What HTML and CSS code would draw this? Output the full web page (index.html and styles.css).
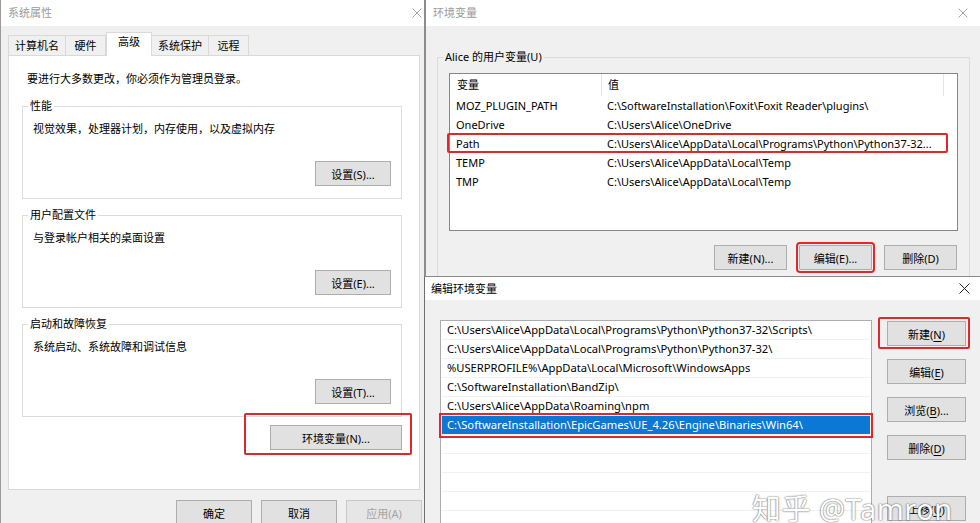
FILE: index.html
```html
<!DOCTYPE html>
<html lang="zh-CN">
<head>
    <meta charset="UTF-8">
    <title>系统属性 - 环境变量</title>
    <link rel="stylesheet" href="styles.css">
</head>
<body>
    <!-- 系统属性 -->
    <div class="win win-sys">
        <div class="titlebar inactive">
            <span class="title">系统属性</span>
            <svg class="close" width="10" height="10" viewBox="0 0 10 10"><path d="M0.5 0.5L9.5 9.5M9.5 0.5L0.5 9.5"/></svg>
        </div>
        <div class="tabs">
            <div class="tab">计算机名</div>
            <div class="tab">硬件</div>
            <div class="tab active">高级</div>
            <div class="tab">系统保护</div>
            <div class="tab">远程</div>
        </div>
        <div class="tab-panel">
            <p class="note">要进行大多数更改，你必须作为管理员登录。</p>
            <fieldset class="group">
                <legend>性能</legend>
                <p>视觉效果，处理器计划，内存使用，以及虚拟内存</p>
                <div class="btn-row"><button class="btn">设置(S)...</button></div>
            </fieldset>
            <fieldset class="group">
                <legend>用户配置文件</legend>
                <p>与登录帐户相关的桌面设置</p>
                <div class="btn-row"><button class="btn">设置(E)...</button></div>
            </fieldset>
            <fieldset class="group">
                <legend>启动和故障恢复</legend>
                <p>系统启动、系统故障和调试信息</p>
                <div class="btn-row"><button class="btn">设置(T)...</button></div>
            </fieldset>
            <div class="btn-row env-row">
                <button class="btn btn-env mark">环境变量(N)...</button>
            </div>
        </div>
        <div class="dlg-buttons">
            <button class="btn">确定</button>
            <button class="btn">取消</button>
            <button class="btn" disabled>应用(A)</button>
        </div>
    </div>

    <!-- 环境变量 -->
    <div class="win win-env">
        <div class="titlebar inactive">
            <span class="title">环境变量</span>
            <svg class="close" width="10" height="10" viewBox="0 0 10 10"><path d="M0.5 0.5L9.5 9.5M9.5 0.5L0.5 9.5"/></svg>
        </div>
        <fieldset class="group user-vars">
            <legend>Alice 的用户变量(U)</legend>
            <div class="listview">
                <div class="lv-row lv-head">
                    <span>变量</span><span>值</span><span></span>
                </div>
                <div class="lv-row"><span>MOZ_PLUGIN_PATH</span><span>C:\SoftwareInstallation\Foxit\Foxit Reader\plugins\</span></div>
                <div class="lv-row"><span>OneDrive</span><span>C:\Users\Alice\OneDrive</span></div>
                <div class="lv-row marked"><span>Path</span><span>C:\Users\Alice\AppData\Local\Programs\Python\Python37-32...</span></div>
                <div class="lv-row"><span>TEMP</span><span>C:\Users\Alice\AppData\Local\Temp</span></div>
                <div class="lv-row"><span>TMP</span><span>C:\Users\Alice\AppData\Local\Temp</span></div>
            </div>
            <div class="env-btns">
                <button class="btn">新建(N)...</button>
                <button class="btn outlined">编辑(E)...</button>
                <button class="btn">删除(D)</button>
            </div>
        </fieldset>
    </div>

    <!-- 编辑环境变量 -->
    <div class="win win-edit">
        <div class="titlebar">
            <span class="title">编辑环境变量</span>
            <svg class="close" width="11" height="11" viewBox="0 0 11 11"><path d="M0.5 0.5L10.5 10.5M10.5 0.5L0.5 10.5"/></svg>
        </div>
        <div class="edit-body">
            <div class="path-list">
                <div class="path-item">C:\Users\Alice\AppData\Local\Programs\Python\Python37-32\Scripts\</div>
                <div class="path-item">C:\Users\Alice\AppData\Local\Programs\Python\Python37-32\</div>
                <div class="path-item">%USERPROFILE%\AppData\Local\Microsoft\WindowsApps</div>
                <div class="path-item">C:\SoftwareInstallation\BandZip\</div>
                <div class="path-item">C:\Users\Alice\AppData\Roaming\npm</div>
                <div class="path-item selected">C:\SoftwareInstallation\EpicGames\UE_4.26\Engine\Binaries\Win64\</div>
                <div class="path-item"></div>
                <div class="path-item"></div>
                <div class="path-item"></div>
                <div class="path-item"></div>
                <div class="path-item"></div>
            </div>
            <div class="side-buttons">
                <button class="btn mark-new">新建(<u>N</u>)</button>
                <button class="btn">编辑(<u>E</u>)</button>
                <button class="btn">浏览(<u>B</u>)...</button>
                <button class="btn">删除(<u>D</u>)</button>
                <button class="btn gap-before">上移(<u>U</u>)</button>
            </div>
        </div>
    </div>

    <div class="watermark">知乎 @Tamron</div>
</body>
</html>
```

FILE: styles.css
```css
* {
    box-sizing: border-box;
}
body {
    margin: 0;
    width: 980px;
    height: 523px;
    overflow: hidden;
    position: relative;
    background: #7a7a7a;
    font-family: "Noto Sans", "Noto Sans CJK SC", sans-serif;
    font-size: 11px;
    color: #000;
}
p {
    margin: 0;
    line-height: 16px;
}

/* windows */
.win {
    position: absolute;
    background: #f0f0f0;
    overflow: hidden;
    display: flex;
    flex-direction: column;
}
.win-sys {
    left: 0;
    top: 0;
    width: 425px;
    height: 523px;
    border-left: 1px solid #9a9a9a;
    border-right: 1px solid #8c8c8c;
}
.win-env {
    left: 425px;
    top: 0;
    width: 555px;
    height: 300px;
    border-left: 1px solid #8c8c8c;
}
.win-edit {
    left: 424px;
    top: 276px;
    width: 556px;
    height: 247px;
    border-left: 1px solid #6e6e6e;
    border-top: 1px solid #8a8a8a;
}

.titlebar {
    height: 26px;
    flex-shrink: 0;
    background: #fff;
    display: flex;
    align-items: center;
    justify-content: space-between;
    padding: 0 12px 0 7px;
}
.titlebar .title {
    line-height: 16px;
}
.titlebar.inactive .title {
    color: #9b9b9b;
}
.close path {
    stroke: #222;
    stroke-width: 1;
    fill: none;
}
.titlebar.inactive .close path {
    stroke: #a6a6a6;
}
.win-sys .titlebar {
    padding-right: 2px;
}
.win-edit .titlebar {
    height: 23px;
    padding: 0 10px 0 6px;
}

/* buttons */
.btn {
    font-family: inherit;
    font-size: 11px;
    height: 25px;
    width: 75px;
    padding: 0;
    background: #e1e1e1;
    border: 1px solid #adadad;
    color: #000;
}
.btn:disabled {
    color: #a3a3a3;
    border-color: #c8c8c8;
    background: #e6e6e6;
}
.btn u {
    text-decoration-thickness: 1px;
    text-underline-offset: 2px;
}
.btn-row {
    display: flex;
    justify-content: flex-end;
}

/* tabs */
.tabs {
    display: flex;
    align-items: flex-end;
    height: 23px;
    margin-top: 6px;
    padding-left: 7px;
}
.tab {
    height: 20px;
    min-width: 40px;
    padding: 0 6px;
    line-height: 19px;
    text-align: center;
    border: 1px solid #d9d9d9;
    border-bottom: none;
    border-left: none;
    background: #f0f0f0;
}
.tab:first-child {
    border-left: 1px solid #d9d9d9;
}
.tab.active {
    height: 24px;
    min-width: 46px;
    line-height: 18px;
    background: #fff;
    border-left: 1px solid #d9d9d9;
    margin-bottom: -1px;
    position: relative;
}
.tab-panel {
    margin-left: 7px;
    width: 412px;
    height: 435px;
    flex-shrink: 0;
    background: #fff;
    border: 1px solid #d9d9d9;
    padding: 0 17px 0 13px;
}
.note {
    margin: 15px 0 11px 5px;
}

.group {
    margin: 0 0 8px 0;
    padding: 0 10px 12px 10px;
    border: 1px solid #dcdcdc;
    min-width: 0;
}
.group legend {
    margin-left: -5px;
    padding: 0 2px;
    line-height: 16px;
}
.group p {
    margin-top: 7px;
}
.group .btn-row {
    margin-top: 24px;
}
.group .btn {
    width: 76px;
}

.env-row {
    margin-top: 7px;
}
.btn-env {
    width: 132px;
}
.mark {
    position: relative;
}
.mark::after {
    content: "";
    position: absolute;
    top: -13px;
    right: -11px;
    bottom: -6px;
    left: -27px;
    border: 2px solid #e0282c;
    border-radius: 2px;
}

.dlg-buttons {
    display: flex;
    justify-content: flex-end;
    gap: 9px;
    margin-top: 10px;
    padding-right: 2px;
}
.dlg-buttons .btn {
    width: 76px;
}

/* environment variables */
.user-vars {
    margin: 23px 10px 0 11px;
    padding: 0 11px 20px 11px;
}
.user-vars legend {
    margin-left: -6px;
}
.listview {
    margin-top: 8px;
    height: 158px;
    background: #fff;
    border: 1px solid #828790;
}
.lv-row {
    display: grid;
    grid-template-columns: 151px 342px 1fr;
    height: 19px;
    line-height: 19px;
    position: relative;
    white-space: nowrap;
}
.lv-row span {
    padding-left: 6px;
    overflow: hidden;
}
.lv-head {
    height: 22px;
    line-height: 22px;
}
.lv-head span + span {
    border-left: 1px solid #e5e5e5;
}
.lv-head span:first-child {
    padding-left: 7px;
}
.marked::after {
    content: "";
    position: absolute;
    top: -1px;
    right: 9px;
    bottom: 0;
    left: -3px;
    border: 2px solid #e0282c;
    border-radius: 2px;
}
.env-btns {
    display: flex;
    justify-content: flex-end;
    margin-top: 14px;
    gap: 12px;
    padding-right: 1px;
}
.user-vars .env-btns .btn {
    width: 73px;
}
.outlined {
    outline: 2px solid #e0282c;
    outline-offset: 1px;
    border-radius: 1px;
}

/* edit dialog */
.edit-body {
    display: flex;
    align-items: flex-start;
    padding: 20px 0 0 15px;
}
.path-list {
    width: 432px;
    height: 240px;
    flex-shrink: 0;
    background: #fff;
    border: 1px solid #abadb3;
    padding: 0 1px;
}
.path-item {
    height: 19px;
    line-height: 18px;
    padding-left: 5px;
    border-bottom: 1px solid #f0f0f0;
    font-size: 11.2px;
    white-space: nowrap;
}
.path-item.selected {
    background: #0a78d4;
    color: #fff;
    outline: 2px solid #e0282c;
    outline-offset: 1px;
    position: relative;
}
.side-buttons {
    display: flex;
    flex-direction: column;
    gap: 13px;
    margin-left: 15px;
    margin-top: 1px;
}
.side-buttons .btn {
    width: 79px;
    height: 25px;
}
.side-buttons .gap-before {
    margin-top: 23px;
}
.mark-new {
    position: relative;
}
.mark-new::after {
    content: "";
    position: absolute;
    top: -5px;
    right: -5px;
    bottom: -4px;
    left: -10px;
    border: 2px solid #e0282c;
    border-radius: 2px;
}

.watermark {
    position: absolute;
    left: 752px;
    top: 491px;
    font-size: 29px;
    line-height: 36px;
    color: #fff;
    letter-spacing: 0.5px;
    text-shadow: 0 0 1px #555, 0 0 2px rgba(0, 0, 0, 0.45);
    white-space: nowrap;
}
```
